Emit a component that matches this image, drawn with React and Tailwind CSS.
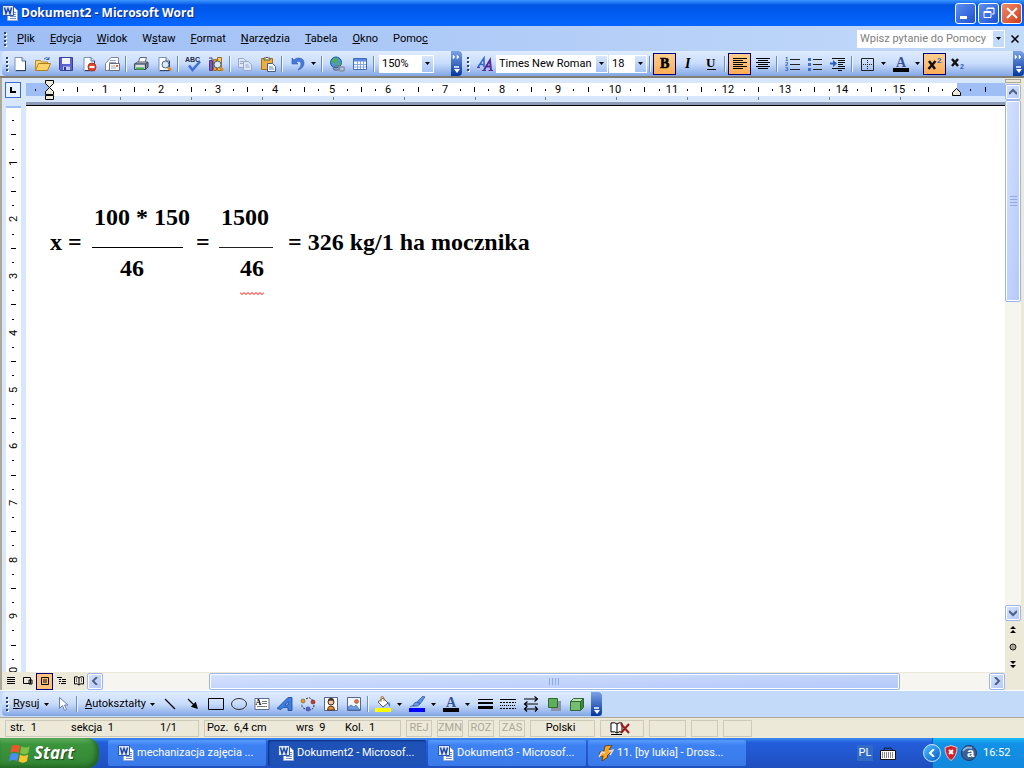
import React from 'react';
import clsx from 'clsx';

const Icon = ({ children, className = "w-4 h-4" }) => (
  <svg className={clsx("shrink-0", className)} viewBox="0 0 16 16" fill="none" aria-hidden="true">
    {children}
  </svg>
);

const sheet = (
  <>
    <path d="M3 1.500h7l3.500 3.500v10H3z" fill="#fff" stroke="#7d90bd" />
    <path d="M10 1.500V5h3.500" stroke="#5b6f9c" fill="#cfdcf5" />
    <path d="M13.500 5v9.500H4" stroke="#2f3f6b" />
  </>
);

const magnifier = (
  <>
    <circle cx="9.500" cy="8.500" r="3.500" fill="#d5ecfb" stroke="#4d5f80" />
    <path d="M12 11.500l3 3" stroke="#d98a1c" strokeWidth="2.500" />
  </>
);

const people = (
  <>
    <circle cx="8" cy="6" r="3" fill="#f3c6a0" stroke="#40291c" />
    <path d="M5 5q0-3 3-3t3 3q-3-1-6 0z" fill="#40291c" />
    <path d="M4.500 14q0-4 3.500-4t3.500 4z" fill="#e8913a" stroke="#5a3310" />
  </>
);

const icons = {
  new: sheet,
  open: (
    <>
      <path d="M.5 14V4.500h5l1 1.500h6v3" fill="#f8d775" stroke="#c08a2a" />
      <path d="M.5 14.500l3-7h12l-3 7z" fill="#ffd466" stroke="#b07d1e" />
      <path d="M9 3q3-3 5 0m0-2v2.500h-3" stroke="#3b63b8" />
    </>
  ),
  save: (
    <>
      <path d="M1.500 1.500h13v13h-12l-1-1z" fill="#5a62cf" stroke="#3a3f9e" />
      <path d="M4 2h8v6H4z" fill="#f2f5ff" />
      <path d="M5 10.500h7V14H5z" fill="#c6cff0" />
      <path d="M6 11h2v3H6z" fill="#2b3593" />
    </>
  ),
  permission: (
    <>
      {sheet}
      <circle cx="11" cy="11" r="4" fill="#e2482d" stroke="#b5321b" />
      <path d="M8.500 11h5" stroke="#fff" strokeWidth="2" />
    </>
  ),
  mail: (
    <>
      <path d="M1.500 14.500v-7L7 1.500h7.500v8" fill="#fff" stroke="#7e8797" />
      <path d="M6 4.500h6M5 6.500h7" stroke="#8ea3cf" />
      <path d="M5.500 7.500h10v7h-10z" fill="#fff" stroke="#6d6d78" />
      <path d="M7 10h4M7 12h5" stroke="#9aa4b5" />
      <path d="M12 9h2v2h-2z" fill="#e2682d" />
      <path d="M1 14.500h5" stroke="#7e8797" />
    </>
  ),
  print: (
    <>
      <path d="M5 7l2-5.500h6.500L12 7z" fill="#fff" stroke="#586478" />
      <path d="M1.500 8l3-2h10l-1.500 2z" fill="#d8dde8" stroke="#4d5666" />
      <path d="M1.500 8h11v5.500h-11z" fill="#b9c1cf" stroke="#3d4656" />
      <path d="M12.500 8l2.500-2v5l-2.500 2.500z" fill="#7b8698" stroke="#3d4656" />
      <path d="M3 11.500h8v2H3z" fill="#47b74b" />
      <path d="M3 10h8" stroke="#fff" />
    </>
  ),
  preview: (
    <>
      {sheet}
      {magnifier}
    </>
  ),
  spell: (
    <>
      <text x="0" y="6" fontSize="7" fontFamily="Liberation Sans" fontWeight="bold" fill="#222b45">ABC</text>
      <path d="M4 9.500l3.500 4.500L15 5.500" stroke="#3f70d8" strokeWidth="2.500" />
    </>
  ),
  research: (
    <>
      <path d="M1.500 4.500h3v10h-3z" fill="#7a55c0" stroke="#4c3a92" />
      <path d="M5.500 3.500h3v11h-3z" fill="#e0a03a" stroke="#a56f20" />
      <path d="M9.500 1.500h4v13h-4z" fill="#f0c568" stroke="#a56f20" />
      <path d="M1 2h3v2" stroke="#4c3a92" />
      {magnifier}
    </>
  ),
  copy: (
    <g stroke="#9aa8c9" fill="#dde7fa">
      <path d="M1.500 2.500h5l3 3v6h-8z" />
      <path d="M6.500 5.500h5l3 3v6h-8z" />
      <path d="M3 5.500h3M3 7.500h3M8.500 9h3M8.500 11h4" />
    </g>
  ),
  paste: (
    <>
      <path d="M1.500 2.500h11v11h-11z" fill="#edae3c" stroke="#a5701d" />
      <path d="M4 4V2h2q1-2 2 0h2v2z" fill="#f5f0dc" stroke="#555" />
      <path d="M7.500 7.500h5l3 3v5h-8z" fill="#fff" stroke="#4a5c8d" />
      <path d="M9 11h4M9 13h5" stroke="#5b7fc7" />
    </>
  ),
  undo: (
    <path d="M3 2v6h6L7 6q4-2 5 1t-3 7q6-2 6-7t-6-5q-2 0-4 2z" fill="#4579dd" stroke="#2b57b5" strokeWidth=".6" />
  ),
  link: (
    <>
      <circle cx="7" cy="6.500" r="5.500" fill="#4c93e3" stroke="#1d5aa2" />
      <path d="M3 4q2-3 5-2l1 3-3 3-2-1zM8 8l3-2 1 2-3 3z" fill="#4db050" />
      <rect x="4.500" y="10" width="6" height="4" rx="2" stroke="#6f7888" strokeWidth="1.500" />
      <rect x="9.500" y="11" width="6" height="4" rx="2" stroke="#8a93a3" strokeWidth="1.500" />
    </>
  ),
  table: (
    <>
      <path d="M1.500 2.500h13v11h-13z" fill="#fff" stroke="#4069b9" />
      <path d="M2 3h12v2.500H2z" fill="#5d8be0" />
      <path d="M2 8.500h12M2 11h12M5.500 5v8M8.500 5v8M11.500 5v8" stroke="#86a8e2" />
    </>
  ),
  styles: (
    <>
      <path d="M1 11L7 2v9M3.500 8.500H7" stroke="#3265c8" strokeWidth="1.500" />
      <path d="M7 14l6-10 1 10M9.500 10.500H14" stroke="#5a2b9b" strokeWidth="2" />
      <path d="M0 11.500h3M5 14.500h4M11.500 14.500H16" stroke="#5a2b9b" />
    </>
  ),
  bold: <text x="3" y="12" fontSize="14" fontFamily="Liberation Serif" fontWeight="bold" stroke="#000" strokeWidth=".6" fill="#000">B</text>,
  italic: <text x="5" y="12" fontSize="14" fontFamily="Liberation Serif" fontWeight="bold" fontStyle="italic" fill="#000">I</text>,
  underline: (
    <>
      <text x="3" y="11" fontSize="13" fontFamily="Liberation Serif" fontWeight="bold" fill="#000">U</text>
      <path d="M4 13.500h9" stroke="#000" />
    </>
  ),
  left: <path d="M1 2.500h14M1 4.500h10M1 6.500h14M1 8.500h10M1 10.500h14M1 12.500h10" stroke="#000" />,
  center: <path d="M1 2.500h14M3 4.500h10M1 6.500h14M3 8.500h10M1 10.500h14M3 12.500h10" stroke="#000" />,
  numbered: (
    <>
      <path d="M6 3.500h10M6 8.500h10M6 13.500h10" stroke="#222" />
      <g fontSize="6" fontFamily="Liberation Sans" fontWeight="bold" fill="#2b5fc4">
        <text x="1" y="5">1</text>
        <text x="1" y="10">2</text>
        <text x="1" y="15">3</text>
      </g>
    </>
  ),
  bullets: (
    <>
      <path d="M6 3.500h9M6 8.500h9M6 13.500h9" stroke="#222" />
      <path d="M1 2h3v3H1zM1 7h3v3H1zM1 12h3v3H1z" fill="#3f6fd0" />
    </>
  ),
  indent: (
    <>
      <path d="M2 2.500h13M8 4.500h7M8 6.500h7M8 8.500h5M8 10.500h7M2 12.500h13M8 14.500h4" stroke="#111" />
      <path d="M0 7.500h4" stroke="#2b5fc4" strokeWidth="2" />
      <path d="M3 4l4 3.500L3 11z" fill="#2b5fc4" />
    </>
  ),
  border: (
    <>
      <path d="M2.500 2.500h12v12h-12z" stroke="#222" />
      <path d="M8.500 4v10M4 8.500h10" stroke="#222" strokeDasharray="1 1" />
    </>
  ),
  fontColor: (
    <>
      <text x="3" y="11" fontSize="14" fontFamily="Liberation Serif" fontWeight="bold" fill="#34549b">A</text>
      <path d="M0 12h16v4H0z" fill="#000" />
    </>
  ),
  sup: (
    <>
      <path d="M2 5l6 8M8.500 5l-7 8" stroke="#111" strokeWidth="2.500" />
      <text x="10" y="7" fontSize="8" fontFamily="Liberation Sans" fontWeight="bold" fill="#2b5fc4">2</text>
    </>
  ),
  sub: (
    <>
      <path d="M2 3l6 7M8 3l-6 7" stroke="#111" strokeWidth="2.500" />
      <text x="10" y="13" fontSize="7" fontFamily="Liberation Sans" fontWeight="bold" fill="#2b5fc4">2</text>
    </>
  ),
  pointer: <path d="M4.500 1.500v11l3-3 2 5 2-1-2-4.500h3.500z" fill="#fff" stroke="#6c7fae" />,
  line: <path d="M3 3l10 10" stroke="#000" strokeWidth="1.300" />,
  arrow: <path d="M3 3l6 6M12 12l-1.500-5-3.500 3.500z" stroke="#000" strokeWidth="1.200" fill="#000" />,
  rect: <path d="M.5 2.500h15v11H.5z" stroke="#000" />,
  ellipse: <ellipse cx="8" cy="8" rx="7.500" ry="5.500" stroke="#333" />,
  textbox: (
    <>
      <path d="M1 2.500h14v11H1z" fill="#fff" stroke="#5d6d94" />
      <text x="1.500" y="9" fontSize="8" fontFamily="Liberation Serif" fontWeight="bold" fill="#000">A</text>
      <path d="M8 5.500h5M8 7.500h5M3 10.500h10" stroke="#777" />
    </>
  ),
  wordart: <path d="M0 12.500L11 1.500h4v13h-4v-3H6l-2 2zM8 9h3V5.500z" fill="#3f7cde" stroke="#17489c" strokeWidth=".8" fillRule="evenodd" />,
  diagram: (
    <>
      <path d="M6 3q4-3 7 2M14 9q0 4-4 5M5 13q-4-2-3-5" stroke="#333" strokeDasharray="2 1" />
      <circle cx="3" cy="5" r="2" fill="#e39a2c" stroke="#80500c" strokeWidth=".6" />
      <circle cx="13" cy="6" r="2" fill="#c73e2d" stroke="#6d150b" strokeWidth=".6" />
      <circle cx="8" cy="13" r="2" fill="#5b66d6" stroke="#252d80" strokeWidth=".6" />
    </>
  ),
  clip: (
    <>
      <path d="M1.500 1.500h13v13h-13z" fill="#fff" stroke="#55678f" />
      {people}
    </>
  ),
  image: (
    <>
      <path d="M1.500 1.500h13v13h-13z" fill="#f3f8ff" stroke="#55678f" />
      <circle cx="10.500" cy="5.500" r="2" fill="#e96f3c" stroke="#8c3412" strokeWidth=".5" />
      <path d="M2 14v-3l3-2 3 2 2-2 4 5z" fill="#6f9adf" stroke="#3a5fa8" strokeWidth=".6" />
    </>
  ),
  fill: (
    <>
      <path d="M3 6l5-4 5 5-5 4z" fill="#fff" stroke="#555" />
      <path d="M6 6V1q2-2 3 1v3" stroke="#b5792a" />
      <path d="M13 6q3 1 2 5-2-1-2-5z" fill="#3f7cde" />
      <path d="M0 12h16v4H0z" fill="#ff0" />
    </>
  ),
  lineColor: (
    <>
      <path d="M8 6l6-6 2 1-5 7z" fill="#5e93e6" stroke="#23509e" strokeWidth=".7" />
      <path d="M4 10q1-4 4-4l3 2q-2 3-7 2zM1 11q2-2 4-1" fill="#6f9be4" stroke="#23509e" strokeWidth=".7" />
      <path d="M0 12h16v4H0z" fill="#00f" />
    </>
  ),
  weight: (
    <>
      <path d="M1 3.500h15" stroke="#000" />
      <path d="M1 7h15" stroke="#000" strokeWidth="2" />
      <path d="M1 11.500h15" stroke="#000" strokeWidth="3" />
    </>
  ),
  dash: (
    <g stroke="#000">
      <path d="M0 3.500h16" />
      <path d="M0 6.500h16M0 12.500h16" strokeDasharray="2 1" />
      <path d="M0 9.500h16" strokeDasharray="1 1" />
    </g>
  ),
  arrows: (
    <g stroke="#000" strokeWidth="1.200">
      <path d="M1 3h13M11.500.500L14.500 3l-3 2.500M2 8h13M4.500 5.500L1.500 8l3 2.500M2 13h12M4 10.500L1.500 13 4 15.500M12 10.500l2.500 2.500-2.500 2.500" />
    </g>
  ),
  shadow: (
    <>
      <path d="M5 5h10v10H5z" fill="#8a93a8" />
      <path d="M2.500 2.500h9v9h-9z" fill="#5fae5c" stroke="#2b6c2c" />
    </>
  ),
  cube: (
    <>
      <path d="M1.500 5.500l3-3h10l-3 3z" fill="#bde0b6" stroke="#2b6c2c" />
      <path d="M11.500 5.500l3-3v9l-3 3z" fill="#3f8642" stroke="#2b6c2c" />
      <path d="M1.500 5.500h10v9h-10z" fill="#76bd70" stroke="#2b6c2c" />
    </>
  ),
  word: (
    <>
      <path d="M6.500 2.500h6l3 3v10h-10v-4" fill="#fff" stroke="#8ca4d8" />
      <path d="M12 7.500h2M12 9.500h2M8 11.500h6M8 13.500h6" stroke="#6f8bc9" />
      <path d="M.5.500h11v10H.5z" fill="#dce8ff" stroke="#2c55b3" />
      <path d="M2.500 2.500l1.500 6 2-5 2 5 1.500-6" stroke="#1f46a8" strokeWidth="1.500" />
    </>
  ),
  winamp: (
    <>
      <path d="M7 1l7-1-3 5h4l-6 6 1 1-6 4 1-5-4 1 1-5 4-1z" fill="#f6a623" stroke="#5b3505" strokeWidth=".8" />
      <path d="M1 12l3-5 3 1M11 6l4-1-3 5" stroke="#ddd" strokeWidth="1.500" />
    </>
  ),
  keyboard: (
    <>
      <path d="M4 5q0-3 2-2t3 0 4 2" stroke="#111" />
      <path d="M.5 5.500h15v9H.5z" fill="#fff" stroke="#111" />
      <path d="M2 8h12M2 10h12M2 12h12" stroke="#111" strokeDasharray="1 1" strokeWidth="1.200" />
    </>
  ),
  shield: (
    <>
      <path d="M8 .500l6 2q0 9-6 13-6-4-6-13z" fill="#d5202c" stroke="#e7c5c5" />
      <path d="M6 5l4 4M10 5l-4 4" stroke="#fff" strokeWidth="2" />
    </>
  ),
  avast: (
    <>
      <circle cx="8" cy="8" r="7.500" fill="#3c5f93" stroke="#233a66" />
      <path d="M2 6q3-5 9-3" stroke="#8fb1dd" strokeWidth="2" />
      <text x="6" y="12" fontSize="13" fontFamily="Liberation Sans" fontWeight="bold" fill="#fff">a</text>
    </>
  ),
  book: (
    <>
      <path d="M1 3q4-1 6 1 2-2 5-1v9q-3-1-5 1-2-2-6-1z" fill="#fff" stroke="#000" />
      <path d="M7 4v9M1 14.500h11" stroke="#000" />
    </>
  ),
  flag: (
    <>
      <path d="M2 3q3-2 6 0L7 8q-3-2-6 0z" fill="#f0562b" />
      <path d="M9 3q3 2 6 0l-1 5q-3 2-6 0z" fill="#7fc241" />
      <path d="M1 9q3-2 6 0l-1 5q-3-2-6 0z" fill="#4b8df0" />
      <path d="M8 9q3 2 6 0l-1 5q-3 2-6 0z" fill="#f8c52c" />
    </>
  ),
};

const Caret = () => (
  <svg className="w-[5px] h-[3px] shrink-0" viewBox="0 0 5 3" aria-hidden="true">
    <path d="M0 0h5L2.500 3z" fill="#000" />
  </svg>
);

const Tool = ({ name, active }) => (
  <button
    aria-label={name}
    className={clsx(
      "w-[23px] h-[22px] shrink-0 flex items-center justify-center",
      active && "border border-[#000080] bg-gradient-to-b from-[#ffd08f] to-[#ffac54]"
    )}
  >
    <Icon>{icons[name]}</Icon>
  </button>
);

const Drop = ({ name }) => (
  <button aria-label={`${name} menu`} className="w-[11px] h-[22px] shrink-0 flex items-center justify-center">
    <Caret />
  </button>
);

const Sep = () => <div className="w-px h-4 ml-[2px] mr-[3px] shrink-0 bg-[#6a8ccb] shadow-[1px_0_0_#f1f6fe]" />;

const Grip = () => (
  <div className="w-[3px] shrink-0 mx-1 flex flex-col gap-[2px]">
    {[0, 1, 2, 3].map((i) => (
      <span key={i} className="w-[2px] h-[2px] bg-[#27417b] shadow-[1px_1px_0_#fff]" />
    ))}
  </div>
);

const Cap = ({ chevrons = true }) => (
  <button
    aria-label="Opcje paska narzędzi"
    className="w-[11px] self-stretch shrink-0 ml-auto rounded-r-sm bg-gradient-to-b from-[#7ba2e7] to-[#00359c] flex justify-center"
  >
    <svg className="w-[9px] h-6" viewBox="0 0 9 24" fill="none" aria-hidden="true">
      {chevrons && <path d="M1 4v4l2-2zM5 4v4l2-2z" fill="#fff" stroke="#fff" strokeWidth=".5" />}
      <path d="M2 16h5" stroke="#fff" strokeWidth="1.500" />
      <path d="M2 18h6l-3 4z" fill="#fff" />
    </svg>
  </button>
);

const Combo = ({ label, value, className }) => (
  <div className={clsx("relative shrink-0 h-[18px] bg-white flex", className)}>
    <select aria-label={label} className="appearance-none w-full h-[18px] pl-[3px] leading-[18px] bg-transparent outline-none" defaultValue={value}>
      <option>{value}</option>
    </select>
    <span className="pointer-events-none absolute right-px top-px bottom-px w-[11px] bg-gradient-to-b from-[#d9e7fc] to-[#a4c3f5] flex items-center justify-center">
      <Caret />
    </span>
  </div>
);

const barBg = "bg-gradient-to-b from-[#dfecff] via-[#c8dcfb] to-[#82a6e4]";

// each menu label is split round its access key
const menus = [
  ["", "P", "lik"],
  ["", "E", "dycja"],
  ["", "W", "idok"],
  ["W", "s", "taw"],
  ["", "F", "ormat"],
  ["", "N", "arzędzia"],
  ["", "T", "abela"],
  ["", "O", "kno"],
  ["Pomo", "c", ""],
];

const TitleBar = () => (
  <header className="h-[26px] shrink-0 flex items-center pl-[2px] pr-[2px] gap-[2px] bg-gradient-to-b from-[#3b96ff] via-[#0055e5] via-20% to-[#0567ff]">
    <Icon>{icons.word}</Icon>
    <h1 className="flex-1 pl-px font-['Open_Sans',sans-serif] font-bold text-[12px] text-white [text-shadow:1px_1px_0_#0b2a8a]">
      Dokument2 - Microsoft Word
    </h1>
    <button aria-label="Minimalizuj" className="w-[21px] h-[21px] rounded-[3px] border border-white bg-gradient-to-br from-[#5f8ff0] to-[#1c4fd0] flex items-end p-1">
      <span className="w-[7px] h-[3px] bg-white" />
    </button>
    <button aria-label="Przywróć" className="w-[21px] h-[21px] rounded-[3px] border border-white bg-gradient-to-br from-[#5f8ff0] to-[#1c4fd0] flex items-center justify-center">
      <svg className="w-3 h-3" viewBox="0 0 12 12" fill="none" stroke="#fff">
        <path d="M4 3.500V1h7v6H9M4 1.500h7" />
        <path d="M1 4.500h7v6H1zM1 5.500h7" />
      </svg>
    </button>
    <button aria-label="Zamknij" className="w-[21px] h-[21px] rounded-[3px] border border-white bg-gradient-to-br from-[#ee8a68] to-[#cf3a10] flex items-center justify-center">
      <svg className="w-3 h-3" viewBox="0 0 12 12" stroke="#fff" strokeWidth="2">
        <path d="M1 1l10 10M11 1L1 11" />
      </svg>
    </button>
  </header>
);

const MenuBar = () => (
  <nav className="h-[25px] shrink-0 flex items-center bg-gradient-to-r from-[#9ebef5] to-[#c4daf9]">
    <Grip />
    <div className="flex-1 flex gap-px pl-px">
      {menus.map(([a, key, b]) => (
        <button key={a + key + b} className="px-[7px] first:pl-[5px]">
          {a}
          <u>{key}</u>
          {b}
        </button>
      ))}
    </div>
    <div className="flex items-center h-[18px] w-[148px] bg-white">
      <input aria-label="Wpisz pytanie do Pomocy" placeholder="Wpisz pytanie do Pomocy" className="flex-1 min-w-0 h-[18px] pl-[3px] outline-none placeholder:text-[#808080]" />
      <button aria-label="Lista pytań" className="w-[11px] h-4 mr-px shrink-0 bg-[#c4daf9] flex items-center justify-center">
        <Caret />
      </button>
    </div>
    <button aria-label="Zamknij dokument" className="w-[19px] flex justify-center">
      <svg className="w-2 h-2" viewBox="0 0 8 8" stroke="#000" strokeWidth="1.500">
        <path d="M.5.500l7 7M7.500.500l-7 7" />
      </svg>
    </button>
  </nav>
);

const Toolbars = () => (
  <div className="h-[25px] shrink-0 flex bg-[#c4daf9]">
    <div className={clsx("w-[460px] ml-[2px] shrink-0 flex items-center rounded-l-sm", barBg)}>
      <Grip />
      <div className="w-[436px] -ml-[5px] flex items-center">
        {["new", "open", "save", "permission", "mail"].map((n) => <Tool key={n} name={n} />)}
        <Sep />
        <Tool name="print" />
        <Tool name="preview" />
        <Sep />
        <Tool name="spell" />
        <Tool name="research" />
        <Sep />
        <Tool name="copy" />
        <Tool name="paste" />
        <Sep />
        <Tool name="undo" />
        <Drop name="undo" />
        <Sep />
        <Tool name="link" />
        <Tool name="table" />
        <Sep />
        <Combo label="Powiększenie" value="150%" className="w-[55px] ml-[2px]" />
      </div>
      <Cap />
    </div>
    <div className={clsx("flex-1 min-w-0 flex items-center pl-px", barBg)}>
      <Grip />
      <div className="flex items-center -ml-px">
        <Tool name="styles" />
        <Combo label="Czcionka" value="Times New Roman" className="w-[112px]" />
        <Combo label="Rozmiar czcionki" value="18" className="w-[38px] ml-px" />
        <Sep />
        <Tool name="bold" active />
        <Tool name="italic" />
        <Tool name="underline" />
        <Sep />
        <Tool name="left" active />
        <Tool name="center" />
        <Sep />
        <Tool name="numbered" />
        <Tool name="bullets" />
        <Tool name="indent" />
        <Sep />
        <Tool name="border" />
        <Drop name="border" />
        <Tool name="fontColor" />
        <Drop name="fontColor" />
        <Tool name="sup" active />
        <Tool name="sub" />
      </div>
      <Cap />
    </div>
  </div>
);

const CM = 56.7;

const HorizontalRuler = () => (
  <svg className="flex-1 min-w-0 h-6 text-[11px]" aria-hidden="true">
    <rect x="0" y="5" width="100%" height="13" fill="#9ebef5" />
    <rect x="23" y="5" width="908" height="13" fill="#fff" />
    {Array.from({ length: 67 }, (_, i) => {
      const x = Math.round(23 + (i * CM) / 4);
      if (i === 0) return null;
      if (i % 4 === 0) {
        return i / 4 < 16 && (
          <text key={i} x={x - 1} y="15" textAnchor="middle" fill="#000">{i / 4}</text>
        );
      }
      return i % 4 === 2
        ? <rect key={i} x={x} y="9" width="1" height="5" fill="#000" />
        : <rect key={i} x={x} y="11" width="1" height="2" fill="#000" />;
    })}
    <rect x="9" y="11" width="1" height="2" fill="#000" />
    {Array.from({ length: 12 }, (_, i) => (
      <rect key={i} x={Math.round(94 + i * 70.9)} y="19" width="1" height="3" fill="#7c7c7c" />
    ))}
    <g fill="#ece9d8" stroke="#000">
      <path d="M19.500 2.500h8v3l-4 4-4-4z" />
      <path d="M23.500 9.500l4 4v3h-8v-3z" />
      <path d="M19.500 17.500h8v4h-8z" />
      <path d="M930.500 10.500l4 4v3h-8v-3z" />
    </g>
  </svg>
);

const VerticalRuler = () => (
  <div className="w-6 shrink-0 bg-[#d8e7fc] pl-1 overflow-hidden">
    <svg className="w-[15px] h-full text-[11px]" aria-hidden="true">
      <rect width="15" height="100%" fill="#fff" />
      <rect width="15" height="2" fill="#9ebef5" />
      {Array.from({ length: 40 }, (_, n) => {
        const i = n + 1;
        const y = Math.round((i * CM) / 4);
        if (i % 4 === 0) {
          return (
            <text key={i} transform={`translate(11 ${y}) rotate(-90)`} textAnchor="middle" fill="#000">{i / 4}</text>
          );
        }
        return i % 4 === 2
          ? <rect key={i} x="5" y={y} width="5" height="1" fill="#000" />
          : <rect key={i} x="6" y={y} width="2" height="1" fill="#000" />;
      })}
    </svg>
  </div>
);

const Page = () => (
  <main className="flex-1 min-w-0 bg-white pl-6 pt-[99px] font-['Liberation_Serif',serif] font-bold text-[24px] leading-[25px] text-black">
    <div className="flex items-start whitespace-nowrap">
      <span className="mt-[25px] w-[42px]">x =</span>
      <div className="w-[91px]">
        <div className="pl-[2px]">100 * 150</div>
        <div className="h-px mt-[17px] bg-black" />
        <div className="mt-2 pl-7">46</div>
      </div>
      <span className="mt-[25px] w-[36px] pl-[13px]">=</span>
      <div className="w-[54px]">
        <div className="pl-[2px]">1500</div>
        <div className="h-px mt-[17px] bg-[#222]" />
        <div className="mt-2 pl-[21px]">46</div>
        <svg className="w-6 h-[3px] ml-[21px] mt-[11px]" viewBox="0 0 24 3" fill="none" stroke="#f00">
          <path d="M0 .500l2 2 2-2 2 2 2-2 2 2 2-2 2 2 2-2 2 2 2-2 2 2 2-2" />
        </svg>
      </div>
      <span className="mt-[25px] pl-[15px]">= 326 kg/1 ha mocznika</span>
    </div>
  </main>
);

const scrollBtn = "border border-[#9cb4ee] bg-gradient-to-br from-[#d5e2fe] to-[#b3c8fa] rounded-[2px] shadow-[inset_0_0_0_1px_#fff] flex items-center justify-center shrink-0";

const Chevron = ({ d }) => (
  <svg className="w-2 h-2" viewBox="0 0 8 8" fill="none" stroke="#4d6185" strokeWidth="2" aria-hidden="true">
    <path d={d} />
  </svg>
);

const views = [
  { label: "Normalny", d: "M4 4.500h8M4 6.500h8M4 8.500h8M4 10.500h8" },
  { label: "Sieć Web", d: "M3.500 4.500h7v6h-7zM9 7h3v4H9z" },
  { label: "Wydruk", d: "M4.500 4.500h7v7h-7zM6 7h4M6 9h4" },
  { label: "Konspekt", d: "M3 4.500h5M5 6.500h2M8 6.500h4M5 8.500h2M8 8.500h4M5 10.500h1M7 10.500h5" },
  { label: "Czytanie", d: "M3.500 4q3-1 4.500 1 2-2 4.500-1v7q-3-1-4.500 1-2-2-4.500-1zM8 5v7M5 6h1M5 8h1M10 6h1M10 8h1" },
];

const BottomRow = () => (
  <div className="h-[18px] shrink-0 flex items-center bg-[#ece9d8]">
    <div className="flex">
      {views.map((v, i) => (
        <button
          key={v.label}
          aria-label={v.label}
          className={clsx("w-[17px] h-[17px] shrink-0 flex items-center justify-center", i === 2 && "border border-[#000080] bg-[#ffc27a]")}
        >
          <Icon><path d={v.d} stroke="#000" /></Icon>
        </button>
      ))}
    </div>
    <div className="flex-1 h-[17px] flex bg-[#f6f5f0] justify-between">
      <button aria-label="W lewo" className={clsx("w-4", scrollBtn)}><Chevron d="M6 0L2 4l4 4" /></button>
      <div className="flex-1 flex">
        <div className="w-[12%] shrink-0" />
        <div className={clsx("w-[78%]", scrollBtn)}>
          <span className="text-[#8fa9e6] flex gap-px">
            {[0, 1, 2, 3].map((i) => <i key={i} className="w-px h-[7px] mr-px bg-current" />)}
          </span>
        </div>
      </div>
      <button aria-label="W prawo" className={clsx("w-4", scrollBtn)}><Chevron d="M2 0l4 4-4 4" /></button>
    </div>
  </div>
);

const RightScroll = () => (
  <div className="w-[19px] shrink-0 pr-[3px] flex flex-col bg-[#ece9d8]">
    <div className="h-1 mt-px mb-px border border-[#aca899]" />
    <button aria-label="W górę" className={clsx("h-4", scrollBtn)}><Chevron d="M0 6l4-4 4 4" /></button>
    <div className="flex-1 bg-[#f6f5f0]">
      <div className={clsx("h-[40%]", scrollBtn)}>
        <span className="flex flex-col gap-px">
          {[0, 1, 2, 3].map((i) => <i key={i} className="w-[7px] h-px mb-px bg-[#8fa9e6]" />)}
        </span>
      </div>
    </div>
    <button aria-label="W dół" className={clsx("h-4", scrollBtn)}><Chevron d="M0 2l4 4 4-4" /></button>
    <div className="h-[69px] flex flex-col items-center">
      {[
        ["Poprzednia strona", <path key="p" d="M8 4l3 3H5zM8 8l3 3H5zM5 11.500h6" fill="#000" />],
        ["Wybierz obiekt", <circle key="c" cx="8" cy="8" r="3" fill="#aaa695" stroke="#222" />],
        ["Następna strona", <path key="n" d="M5 5h6L8 8zM5 9h6l-3 3zM5 4.500h6" fill="#000" />],
      ].map(([label, shape]) => (
        <button key={label} aria-label={label} className="w-4 h-[17px] flex items-center"><Icon>{shape}</Icon></button>
      ))}
    </div>
  </div>
);

const DrawBar = () => (
  <div className="h-7 shrink-0 border-t border-b border-t-white border-b-[#aca899] bg-[#c4daf9] flex">
    <div className={clsx("w-[600px] ml-[2px] my-px flex items-center rounded-l-sm", barBg)}>
      <Grip />
      <div className="flex items-center">
        <button className="w-[38px] flex items-center justify-between pr-[2px]"><span><u>R</u>ysuj</span><Caret /></button>
        <Tool name="pointer" />
        <Sep />
        <button className="w-[78px] pl-[5px] pr-[3px] flex items-center justify-between"><span><u>A</u>utokształty</span><Caret /></button>
        {["line", "arrow", "rect", "ellipse", "textbox", "wordart", "diagram", "clip", "image"].map((n) => <Tool key={n} name={n} />)}
        <Sep />
        {["fill", "lineColor", "fontColor"].map((n) => (
          <React.Fragment key={n}>
            <Tool name={n} />
            <Drop name={n} />
          </React.Fragment>
        ))}
        {["weight", "dash", "arrows", "shadow", "cube"].map((n) => <Tool key={n} name={n} />)}
      </div>
      <Cap chevrons={false} />
    </div>
  </div>
);

const panel = "h-[17px] shrink-0 border border-[#cdcabb] flex items-center";

const StatusBar = () => (
  <footer className="h-5 shrink-0 pl-[5px] flex items-center gap-[5px] bg-[#ece9d8]">
    <div className={clsx("w-[194px] pl-1", panel)}>
      <span className="w-[61px]">str.&nbsp; 1</span>
      <span className="w-[89px]">sekcja&nbsp; 1</span>
      <span>1/1</span>
    </div>
    <div className={clsx("w-[197px] pl-[2px]", panel)}>
      <span className="w-[89px]">Poz.&nbsp; 6,4 cm</span>
      <span className="w-[49px]">wrs&nbsp; 9</span>
      <span>Kol.&nbsp; 1</span>
    </div>
    {["REJ", "ZMN", "ROZ", "ZAS"].map((t) => (
      <div key={t} className={clsx("w-[26px] justify-center text-[#aca899]", panel)}>{t}</div>
    ))}
    <div className={clsx("w-[65px] pr-1 justify-center", panel)}>Polski</div>
    <div className={clsx("w-[44px] pr-1 justify-center", panel)}>
      <svg className="w-5 h-4" viewBox="0 0 20 16" fill="none" aria-hidden="true">
        {icons.book}
        <path d="M11 4l8 9M19 4l-8 9" stroke="#a01818" strokeWidth="2" />
      </svg>
    </div>
    <div className={clsx("w-[37px]", panel)} />
    <div className={clsx("w-[27px]", panel)} />
    <div className={clsx("w-[29px]", panel)} />
  </footer>
);

const tasks = [
  { label: "mechanizacja zajęcia ...", icon: "word" },
  { label: "Dokument2 - Microsof...", icon: "word", active: true },
  { label: "Dokument3 - Microsof...", icon: "word" },
  { label: "11. [by lukia] - Dross...", icon: "winamp" },
];

const TaskBar = () => (
  <div className="h-[30px] shrink-0 flex items-stretch text-white bg-gradient-to-b from-[#3f8cf0] via-[#245edb] via-15% to-[#1e4fbf]">
    <button className="w-[99px] shrink-0 mr-[9px] pl-[9px] gap-[3px] flex items-center rounded-r-xl bg-gradient-to-b from-[#62b264] via-[#3c953c] via-20% to-[#328434] shadow-[inset_-3px_-2px_5px_#1f6322]">
      <Icon className="w-[22px] h-[22px]">{icons.flag}</Icon>
      <span className="font-['Open_Sans',sans-serif] font-bold italic text-[17px] leading-5 [text-shadow:1px_1px_1px_#1d4a1d]">Start</span>
    </button>
    {tasks.map((t) => (
      <button
        key={t.label}
        className={clsx(
          "w-[158px] mr-[2px] my-[2px] pl-[10px] gap-[3px] flex items-center rounded-[2px] whitespace-nowrap",
          t.active
            ? "bg-[#1e52b7] shadow-[inset_1px_1px_2px_#0e2f7a]"
            : "bg-gradient-to-b from-[#5a9bfb] via-[#3c81f3] via-20% to-[#3a7ae8]"
        )}
      >
        <Icon>{icons[t.icon]}</Icon>
        {t.label}
      </button>
    ))}
    <div className="ml-auto flex items-center gap-[7px]">
      <span className="w-4 h-4 bg-[#316ac5] flex items-center justify-center">PL</span>
      <Icon>{icons.keyboard}</Icon>
    </div>
    <div className="w-[92px] ml-[36px] flex items-center gap-[2px] border-l border-[#0d5fb5] bg-gradient-to-b from-[#18b9f5] via-[#1290e8] via-20% to-[#1189dc]">
      <button aria-label="Pokaż ukryte ikony" className="w-[18px] h-[18px] -ml-[10px] shrink-0 rounded-full border border-[#cfe8ff] bg-gradient-to-br from-[#4fc0ff] to-[#0a58c9] flex items-center justify-center">
        <svg className="w-2 h-2" viewBox="0 0 8 8" fill="none" stroke="#fff" strokeWidth="2"><path d="M6 0L2 4l4 4" /></svg>
      </button>
      <Icon>{icons.shield}</Icon>
      <Icon>{icons.avast}</Icon>
      <time className="pl-1">16:52</time>
    </div>
  </div>
);

const App = () => (
  <div className="h-screen flex flex-col overflow-hidden font-['Roboto',sans-serif] text-[11px] leading-[14px] text-black">
    <TitleBar />
    <MenuBar />
    <Toolbars />
    <div className="flex-1 min-h-0 flex border-t-2 border-[#807d73]">
      <div className="w-[2px] shrink-0 bg-[#aca899]" />
      <div className="flex-1 min-w-0 flex flex-col bg-[#d8e7fc]">
        <div className="h-7 shrink-0 flex">
          <div className="w-6 shrink-0 pl-[3px] pt-1">
            <button aria-label="Tabulator" className="w-4 h-4 border border-[#3c6bc9] bg-[#e8f1ff] flex items-center justify-center">
              <svg className="w-[6px] h-[6px]" viewBox="0 0 6 6"><path d="M1 0v5h5" fill="none" stroke="#000" strokeWidth="2" /></svg>
            </button>
          </div>
          <div className="flex-1 min-w-0 flex flex-col">
            <HorizontalRuler />
            <div className="h-1 bg-[#8f9bb8] border-b border-black" />
          </div>
        </div>
        <div className="flex-1 min-h-0 flex">
          <VerticalRuler />
          <Page />
        </div>
        <BottomRow />
      </div>
      <RightScroll />
    </div>
    <DrawBar />
    <StatusBar />
    <TaskBar />
  </div>
);

export default App;
